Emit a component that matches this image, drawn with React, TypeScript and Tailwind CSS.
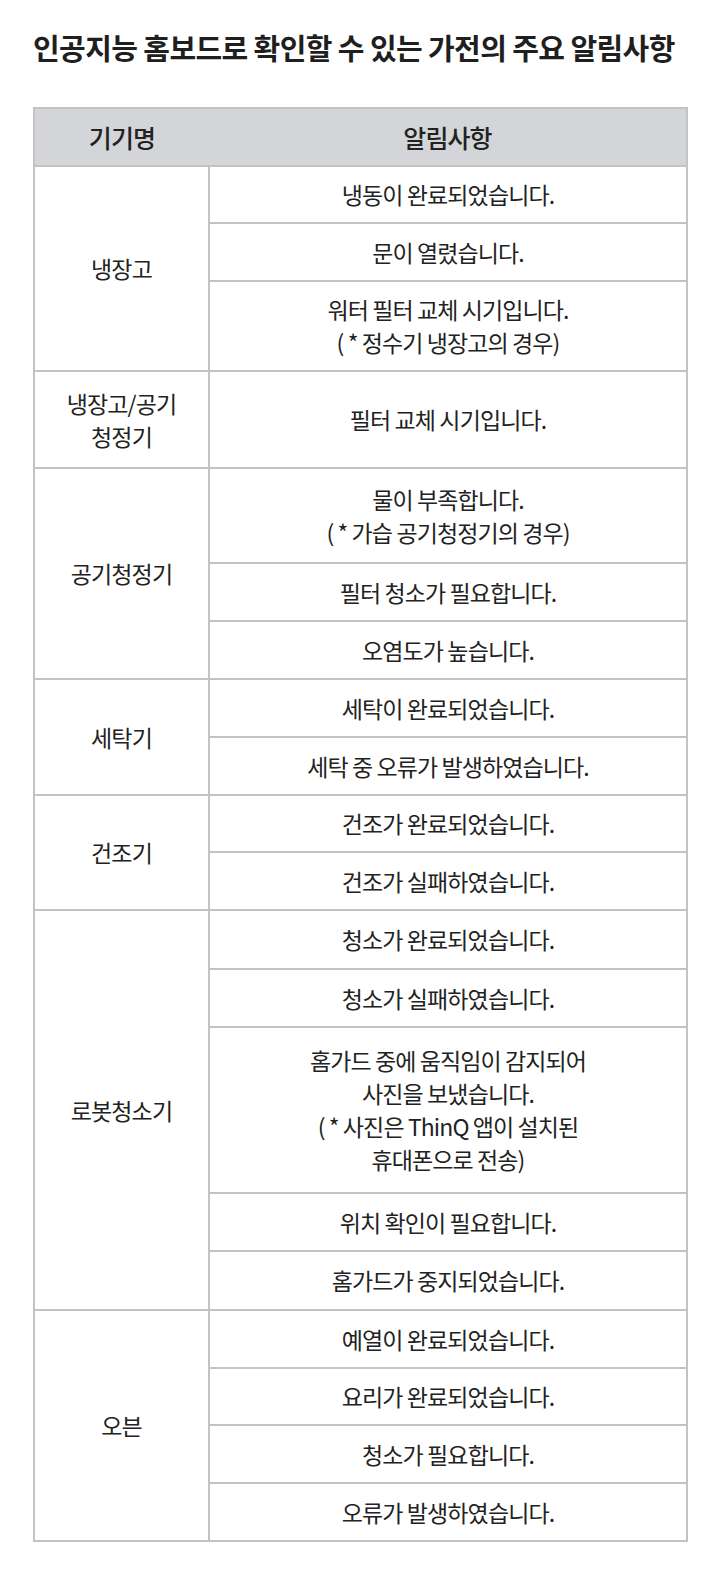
const rows: { device: string; span: number; items: { text: string[]; h: number }[] }[] = [
  {
    device: '냉장고',
    span: 3,
    items: [
      { text: ['냉동이 완료되었습니다.'], h: 57 },
      { text: ['문이 열렸습니다.'], h: 58 },
      { text: ['워터 필터 교체 시기입니다.', '( * 정수기 냉장고의 경우)'], h: 90 },
    ],
  },
  {
    device: '냉장고/공기\n청정기',
    span: 1,
    items: [{ text: ['필터 교체 시기입니다.'], h: 97 }],
  },
  {
    device: '공기청정기',
    span: 3,
    items: [
      { text: ['물이 부족합니다.', '( * 가습 공기청정기의 경우)'], h: 95 },
      { text: ['필터 청소가 필요합니다.'], h: 58 },
      { text: ['오염도가 높습니다.'], h: 58 },
    ],
  },
  {
    device: '세탁기',
    span: 2,
    items: [
      { text: ['세탁이 완료되었습니다.'], h: 58 },
      { text: ['세탁 중 오류가 발생하였습니다.'], h: 58 },
    ],
  },
  {
    device: '건조기',
    span: 2,
    items: [
      { text: ['건조가 완료되었습니다.'], h: 57 },
      { text: ['건조가 실패하였습니다.'], h: 58 },
    ],
  },
  {
    device: '로봇청소기',
    span: 5,
    items: [
      { text: ['청소가 완료되었습니다.'], h: 59 },
      { text: ['청소가 실패하였습니다.'], h: 58 },
      {
        text: ['홈가드 중에 움직임이 감지되어', '사진을 보냈습니다.', '( * 사진은 ThinQ 앱이 설치된', '휴대폰으로 전송)'],
        h: 166,
      },
      { text: ['위치 확인이 필요합니다.'], h: 58 },
      { text: ['홈가드가 중지되었습니다.'], h: 59 },
    ],
  },
  {
    device: '오븐',
    span: 4,
    items: [
      { text: ['예열이 완료되었습니다.'], h: 58 },
      { text: ['요리가 완료되었습니다.'], h: 57 },
      { text: ['청소가 필요합니다.'], h: 58 },
      { text: ['오류가 발생하였습니다.'], h: 58 },
    ],
  },
];

const cell = 'border-2 border-[#c3c3c3] text-center align-middle p-0';

export default function App() {
  return (
    <div className="min-h-[1574px] bg-white px-[33px] pt-[26px] font-['Noto_Sans_CJK_KR',sans-serif] text-[#222]">
      <h1 className="text-[29px] font-bold leading-[42px] tracking-[-0.6px] text-[#1f1f1f]">
        인공지능 홈보드로 확인할 수 있는 가전의 주요 알림사항
      </h1>
      <table className="mt-[39px] w-[655px] border-collapse border-2 border-[#c3c3c3] text-[23px] leading-[33px] tracking-[-0.9px]">
        <colgroup>
          <col className="w-[175px]" />
          <col />
        </colgroup>
        <thead>
          <tr className="h-[58px] bg-[#d3d5d8]">
            <th className="border-x-0 border-b-0 text-center align-middle text-[25px] font-medium">기기명</th>
            <th className="border-x-0 border-b-0 text-center align-middle text-[25px] font-medium">알림사항</th>
          </tr>
        </thead>
        <tbody>
          {rows.map((g) =>
            g.items.map((it, i) => (
              <tr key={g.device + i} style={{ height: it.h }}>
                {i === 0 && (
                  <td rowSpan={g.span} className={`${cell} whitespace-pre-line`}>
                    {g.device}
                  </td>
                )}
                <td className={cell}>
                  {it.text.map((t) => (
                    <div key={t}>{t}</div>
                  ))}
                </td>
              </tr>
            )),
          )}
        </tbody>
      </table>
    </div>
  );
}
